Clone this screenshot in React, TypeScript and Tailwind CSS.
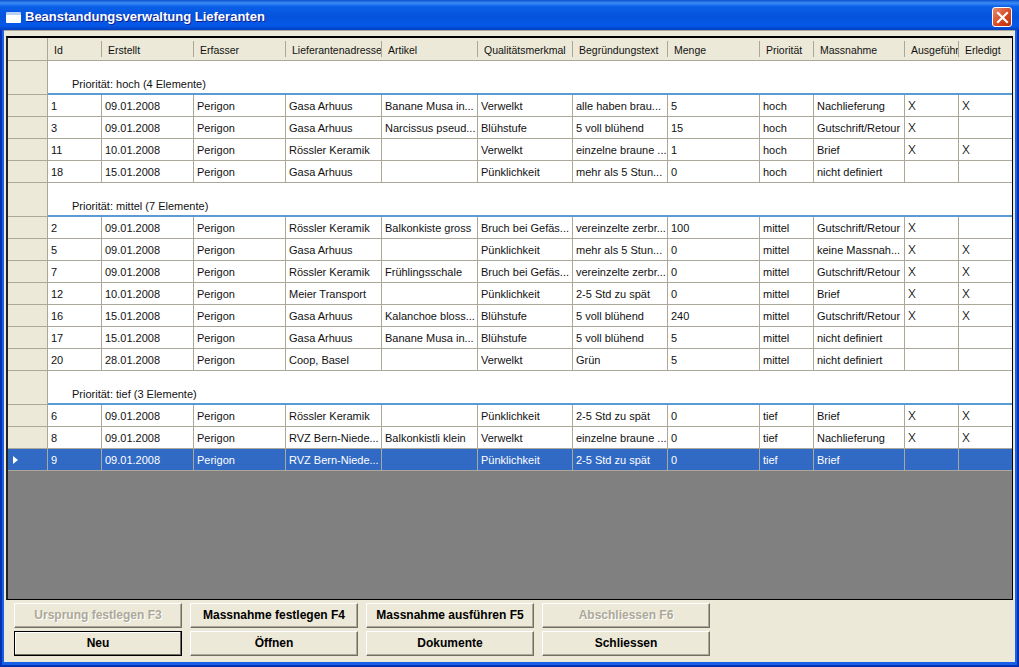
import React from 'react';

const columns = [
  { label: 'Id', cls: 'w-[54px]' },
  { label: 'Erstellt', cls: 'w-[92px]' },
  { label: 'Erfasser', cls: 'w-[92px]' },
  { label: 'Lieferantenadresse', cls: 'w-[96px]' },
  { label: 'Artikel', cls: 'w-[96px]' },
  { label: 'Qualitätsmerkmal', cls: 'w-[95px]' },
  { label: 'Begründungstext', cls: 'w-[95px]' },
  { label: 'Menge', cls: 'w-[92px]' },
  { label: 'Priorität', cls: 'w-[54px]' },
  { label: 'Massnahme', cls: 'w-[91px]' },
  { label: 'Ausgeführt', cls: 'w-[54px]' },
  { label: 'Erledigt', cls: 'w-[54px]' },
];

type Row = string[];

const groups: { title: string; rows: Row[] }[] = [
  {
    title: 'Priorität: hoch (4 Elemente)',
    rows: [
      ['1', '09.01.2008', 'Perigon', 'Gasa Arhuus', 'Banane Musa in...', 'Verwelkt', 'alle haben brau...', '5', 'hoch', 'Nachlieferung', 'X', 'X'],
      ['3', '09.01.2008', 'Perigon', 'Gasa Arhuus', 'Narcissus pseud...', 'Blühstufe', '5 voll blühend', '15', 'hoch', 'Gutschrift/Retour', 'X', ''],
      ['11', '10.01.2008', 'Perigon', 'Rössler Keramik', '', 'Verwelkt', 'einzelne braune ...', '1', 'hoch', 'Brief', 'X', 'X'],
      ['18', '15.01.2008', 'Perigon', 'Gasa Arhuus', '', 'Pünklichkeit', 'mehr als 5 Stun...', '0', 'hoch', 'nicht definiert', '', ''],
    ],
  },
  {
    title: 'Priorität: mittel (7 Elemente)',
    rows: [
      ['2', '09.01.2008', 'Perigon', 'Rössler Keramik', 'Balkonkiste gross', 'Bruch bei Gefäs...', 'vereinzelte zerbr...', '100', 'mittel', 'Gutschrift/Retour', 'X', ''],
      ['5', '09.01.2008', 'Perigon', 'Gasa Arhuus', '', 'Pünklichkeit', 'mehr als 5 Stun...', '0', 'mittel', 'keine Massnah...', 'X', 'X'],
      ['7', '09.01.2008', 'Perigon', 'Rössler Keramik', 'Frühlingsschale', 'Bruch bei Gefäs...', 'vereinzelte zerbr...', '0', 'mittel', 'Gutschrift/Retour', 'X', 'X'],
      ['12', '10.01.2008', 'Perigon', 'Meier Transport', '', 'Pünklichkeit', '2-5 Std zu spät', '0', 'mittel', 'Brief', 'X', 'X'],
      ['16', '15.01.2008', 'Perigon', 'Gasa Arhuus', 'Kalanchoe bloss...', 'Blühstufe', '5 voll blühend', '240', 'mittel', 'Gutschrift/Retour', 'X', 'X'],
      ['17', '15.01.2008', 'Perigon', 'Gasa Arhuus', 'Banane Musa in...', 'Blühstufe', '5 voll blühend', '5', 'mittel', 'nicht definiert', '', ''],
      ['20', '28.01.2008', 'Perigon', 'Coop, Basel', '', 'Verwelkt', 'Grün', '5', 'mittel', 'nicht definiert', '', ''],
    ],
  },
  {
    title: 'Priorität: tief (3 Elemente)',
    rows: [
      ['6', '09.01.2008', 'Perigon', 'Rössler Keramik', '', 'Pünklichkeit', '2-5 Std zu spät', '0', 'tief', 'Brief', 'X', 'X'],
      ['8', '09.01.2008', 'Perigon', 'RVZ Bern-Niede...', 'Balkonkistli klein', 'Verwelkt', 'einzelne braune ...', '0', 'tief', 'Nachlieferung', 'X', 'X'],
      ['9', '09.01.2008', 'Perigon', 'RVZ Bern-Niede...', '', 'Pünklichkeit', '2-5 Std zu spät', '0', 'tief', 'Brief', '', ''],
    ],
  },
];

function Selector({ className, children }: { className: string; children?: React.ReactNode }) {
  return <div className={`w-[40px] shrink-0 border-r border-b border-[#aca899] flex items-center pl-[5px] ${className}`}>{children}</div>;
}

function DataRow({ row, selected }: { row: Row; selected: boolean }) {
  return (
    <div className="flex h-[22px]">
      <Selector className={selected ? 'bg-[#316ac5]' : 'bg-[#ece9d8]'}>
        {selected && <div className="w-0 h-0 border-y-[4px] border-y-transparent border-l-[5px] border-l-white" />}
      </Selector>
      {columns.map((col, i) => (
        <div
          key={col.label}
          className={`${col.cls} shrink-0 border-r border-b border-[#aca899] pl-[3px] pt-[3px] whitespace-nowrap overflow-hidden ${selected ? 'bg-[#316ac5] text-white' : 'bg-white text-[#111]'}`}
        >
          {row[i] === 'X' ? <span className="font-['Inter',sans-serif] font-light text-[12px] leading-none text-black">X</span> : row[i]}
        </div>
      ))}
    </div>
  );
}

function Btn({ label, disabled, primary }: { label: string; disabled?: boolean; primary?: boolean }) {
  return (
    <div
      className={`w-[168px] h-[25px] pb-px bg-[#ece9d8] flex items-center justify-center text-[12px] font-bold border ${
        primary
          ? 'border-black shadow-[inset_-1px_-1px_0_#716f64,inset_1px_1px_0_#fff]'
          : 'border-t-white border-l-white border-r-[#716f64] border-b-[#716f64] shadow-[inset_-1px_-1px_0_#aca899]'
      } ${disabled ? 'text-[#aca899] [text-shadow:1px_1px_0_#fff]' : 'text-black'}`}
    >
      {label}
    </div>
  );
}

export default function App() {
  return (
    <div className="w-[1019px] h-[667px] flex flex-col overflow-hidden bg-[#0831b0] font-['Liberation_Sans',sans-serif] text-[11px]">
      <div className="h-[30px] shrink-0 flex items-center pt-[4px] pl-[6px] pr-[7px] bg-[linear-gradient(180deg,#0a4fd0_0%,#3c8cf5_10%,#0a5fe8_22%,#0553dc_55%,#0558e8_85%,#033fc0_100%)]">
        <div className="w-[15px] h-[11px] rounded-[1px] bg-white border-t-[3px] border-[#b9d1f5] mr-1" />
        <span className="text-white font-bold text-[13px] [text-shadow:1px_1px_0_#0f1f8c] whitespace-nowrap">Beanstandungsverwaltung Lieferanten</span>
        <div className="ml-auto w-[20px] h-[20px] rounded-[3px] border border-white bg-[linear-gradient(135deg,#e98a6c,#d5441e_60%,#c0300f)] flex items-center justify-center">
          <svg width="13" height="13" viewBox="0 0 13 13">
            <path d="M2 2 L11 11 M11 2 L2 11" stroke="#fff" strokeWidth="2.2" strokeLinecap="square" />
          </svg>
        </div>
      </div>

      <div className="flex-1 min-h-0 flex flex-col px-[2px] pb-[2px]">
        <div className="flex-1 min-h-0 flex flex-col border-x-2 border-b-[3px] border-[#1660ea]">
          <div className="flex-1 min-h-0 bg-[#ece9d8] flex flex-col px-[2px] pt-[5px] border-t border-[#aca899]">
            <div className="h-[564px] shrink-0 border border-black border-l-2 border-t-2 border-l-[#222] bg-[#808080] overflow-hidden">
              <div className="flex h-[23px] bg-[#ece9d8] border-b border-[#aca899] text-[10.5px]">
                <div className="w-[40px] shrink-0 border-r border-[#aca899]" />
                {columns.map((col) => (
                  <div key={col.label} className={`${col.cls} shrink-0 flex items-center pl-[6px] pt-[3px] whitespace-nowrap overflow-hidden text-[#111] relative`}>
                    {col.label}
                    <div className="absolute right-0 top-[3px] bottom-[3px] w-px bg-[#aca899]" />
                  </div>
                ))}
              </div>
              {groups.map((group) => (
                <div key={group.title}>
                  <div className="flex h-[34px]">
                    <Selector className="bg-[#ece9d8]" />
                    <div className="flex-1 bg-white border-b-2 border-[#5b9bd5] pl-[24px] pt-[15px] text-[#111] whitespace-nowrap">{group.title}</div>
                  </div>
                  {group.rows.map((row) => (
                    <DataRow key={row[0]} row={row} selected={row[0] === '9'} />
                  ))}
                </div>
              ))}
            </div>

            <div className="flex flex-col gap-[3px] pl-[8px] pt-[3px]">
              <div className="flex gap-2">
                <Btn label="Ursprung festlegen F3" disabled />
                <Btn label="Massnahme festlegen F4" />
                <Btn label="Massnahme ausführen F5" />
                <Btn label="Abschliessen F6" disabled />
              </div>
              <div className="flex gap-2">
                <Btn label="Neu" primary />
                <Btn label="Öffnen" />
                <Btn label="Dokumente" />
                <Btn label="Schliessen" />
              </div>
            </div>
          </div>
        </div>
      </div>
    </div>
  );
}
